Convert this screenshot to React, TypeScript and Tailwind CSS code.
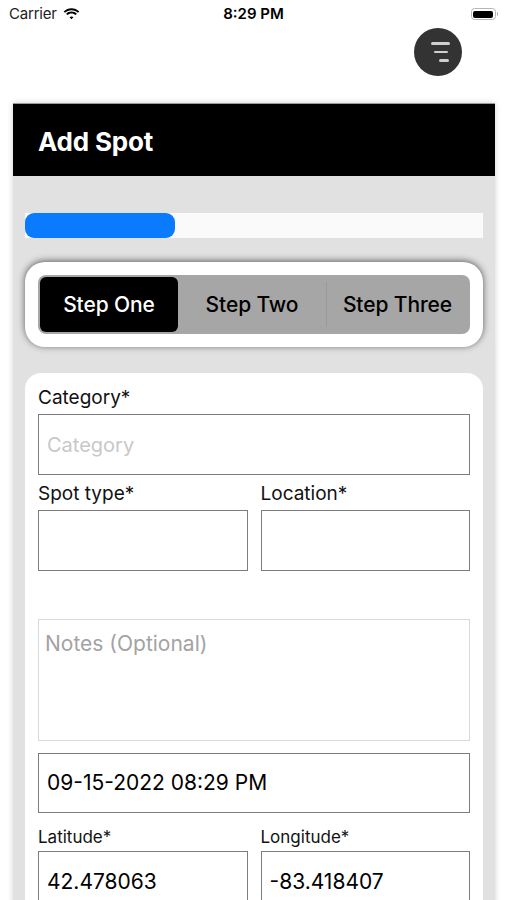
import React from "react";

function Wifi() {
  return (
    <svg width="17" height="12" viewBox="0 0 17 12" className="ml-[6px]">
      <path d="M8.5 2.2c2.5 0 4.8 1 6.5 2.6l1.3-1.3C14.2 1.4 11.5.2 8.5.2S2.8 1.4.7 3.5L2 4.8c1.7-1.6 4-2.6 6.5-2.6z" fill="#000" />
      <path d="M8.5 5.4c1.6 0 3 .6 4.1 1.6l1.3-1.3C12.5 4.4 10.6 3.5 8.5 3.5S4.5 4.4 3.1 5.7L4.4 7c1.1-1 2.5-1.6 4.1-1.6z" fill="#000" />
      <path d="M8.5 8.6c.8 0 1.4.3 1.9.7L8.5 11.3 6.6 9.3c.5-.4 1.1-.7 1.9-.7z" fill="#000" />
    </svg>
  );
}

function Battery() {
  return (
    <div className="flex items-center">
      <div className="w-[25px] h-[12px] rounded-[3.5px] border border-[#b5b5b5] p-[1.5px]">
        <div className="w-full h-full bg-black rounded-[2px]" />
      </div>
      <div className="w-[1.5px] h-[4px] bg-[#b5b5b5] rounded-r-sm ml-[1px]" />
    </div>
  );
}

export default function App() {
  const font = { fontFamily: "Inter, 'Noto Sans', sans-serif" } as React.CSSProperties;
  return (
    <div className="w-[507px] h-[900px] bg-white overflow-hidden font-['Inter',sans-serif]" style={font}>
      {/* status bar */}
      <div className="relative h-[28px] flex items-center px-[9px]">
        <div className="flex items-center">
          <span className="text-[15px] text-[#222] tracking-[-0.2px]">Carrier</span>
          <Wifi />
        </div>
        <span className="absolute left-0 right-0 text-center text-[15px] font-semibold text-black pointer-events-none">
          8:29 PM
        </span>
        <div className="ml-auto">
          <Battery />
        </div>
      </div>

      {/* menu button row */}
      <div className="h-[75px] flex justify-end items-start pr-[45px]">
        <div className="w-[48px] h-[48px] rounded-full bg-[#333333] flex flex-col items-center justify-center gap-[6px] pl-[4px]">
          <div className="w-[19px] h-[2.5px] bg-[#cfcfcf] rounded-full" />
          <div className="w-[14px] h-[2.5px] bg-[#cfcfcf] rounded-full ml-[2px]" />
          <div className="w-[10px] h-[2.5px] bg-[#cfcfcf] rounded-full ml-[7px]" />
        </div>
      </div>

      {/* panel */}
      <div className="ml-[13px] w-[482px] shadow-[0_0_6px_rgba(0,0,0,0.18)]">
        <div className="h-[73px] bg-black flex items-center pl-[25px] border-t border-[#9a9a9a]">
          <span className="text-white text-[26px] font-bold tracking-[-0.2px] pt-[2px]">Add Spot</span>
        </div>
        <div className="bg-[#e1e1e1] pt-[37px] pl-[12px] pr-[12px]">
          {/* progress */}
          <div className="h-[25px] bg-[#fafafa] flex">
            <div className="w-[150px] h-full bg-[#0a7aff] rounded-[9px]" />
          </div>

          {/* segment card */}
          <div className="mt-[24px] h-[85px] bg-white rounded-[20px] p-[13px] shadow-[0_-1px_7px_rgba(0,0,0,0.6)]">
            <div className="h-full bg-[#a6a6a6] rounded-[8px] p-[2px] grid grid-cols-[138px_148px_1fr] items-center">
              <div className="h-full bg-black rounded-[6px] flex items-center justify-center">
                <span className="text-white text-[21px] font-medium tracking-[-0.1px]">Step One</span>
              </div>
              <div className="h-full flex items-center justify-center">
                <span className="text-black text-[21px] font-medium tracking-[-0.1px]">Step Two</span>
              </div>
              <div className="flex items-center justify-center border-l border-[#999999] h-[45px]">
                <span className="text-black text-[21px] font-medium tracking-[-0.1px]">Step Three</span>
              </div>
            </div>
          </div>

          {/* form card */}
          <div className="mt-[26px] bg-white rounded-t-[16px] px-[13px] pt-[13px] pb-[40px]">
            <div className="text-[19px] leading-[24px] text-[#111]">Category*</div>
            <div className="mt-[4px] h-[61px] border-[1.5px] border-[#7d7d7d] flex items-center pl-[8px]">
              <span className="text-[20px] text-[#c8c8c8]">Category</span>
            </div>

            <div className="grid grid-cols-2 gap-x-[13px] mt-[7px]">
              <div>
                <div className="text-[19px] leading-[24px] text-[#111]">Spot type*</div>
                <div className="mt-[4px] h-[61px] border-[1.5px] border-[#7d7d7d]" />
              </div>
              <div>
                <div className="text-[19px] leading-[24px] text-[#111]">Location*</div>
                <div className="mt-[4px] h-[61px] border-[1.5px] border-[#7d7d7d]" />
              </div>
            </div>

            <div className="mt-[48px] h-[122px] border border-[#d9d9d9] pl-[6px] pt-[8px]">
              <span className="text-[21px] text-[#a3a3a3]">Notes (Optional)</span>
            </div>

            <div className="mt-[12px] h-[60px] border-[1.5px] border-[#7d7d7d] flex items-center pl-[8px]">
              <span className="text-[21px] text-black">09-15-2022 08:29 PM</span>
            </div>

            <div className="grid grid-cols-2 gap-x-[13px] mt-[14px]">
              <div>
                <div className="text-[17px] leading-[20px] text-[#111]">Latitude*</div>
                <div className="mt-[4px] h-[61px] border-[1.5px] border-[#7d7d7d] flex items-center pl-[8px]">
                  <span className="text-[21px] text-black">42.478063</span>
                </div>
              </div>
              <div>
                <div className="text-[17px] leading-[20px] text-[#111]">Longitude*</div>
                <div className="mt-[4px] h-[61px] border-[1.5px] border-[#7d7d7d] flex items-center pl-[8px]">
                  <span className="text-[21px] text-black">-83.418407</span>
                </div>
              </div>
            </div>
          </div>
        </div>
      </div>
    </div>
  );
}
